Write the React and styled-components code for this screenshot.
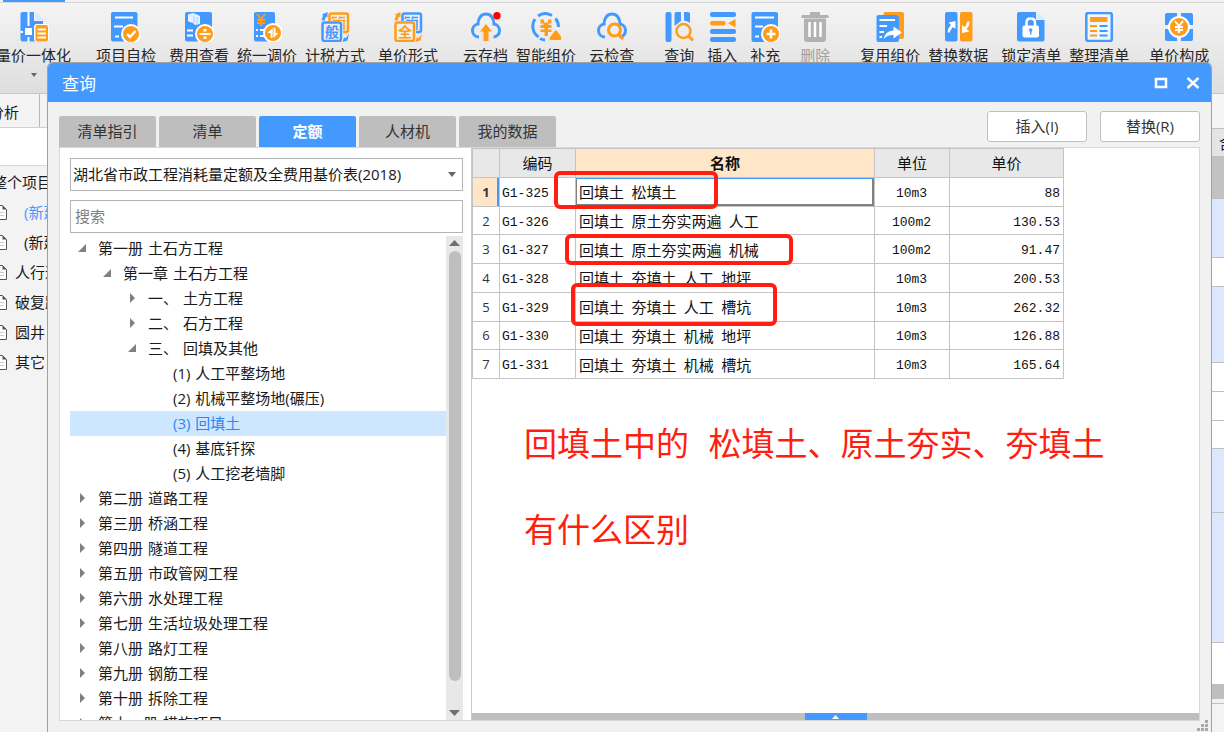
import React from 'react';
import styled, { createGlobalStyle } from 'styled-components';

const BLUE = '#4499ff';
const ORANGE = '#ff9c1a';
const RED = '#ff1e10';

const GlobalStyle = createGlobalStyle`
  * {
    box-sizing: border-box;
  }
  body {
    margin: 0;
    background: #f3f3f3;
    color: #1a1a1a;
    font: 15px/20px "Open Sans", "Noto Sans CJK SC", sans-serif;
  }
  button, input, select {
    font: inherit;
    color: inherit;
  }
`

const Screen = styled.div`
  position: relative;
  display: flex;
  flex-direction: column;
  height: 100vh;
  overflow: hidden;
`

const MenuStrip = styled.div`
  flex: none;
  height: 3px;
  padding-left: 3px;
  border-bottom: 1px solid #d6d6d6;
  background: #f3f3f3;
`

const MenuActive = styled.div`
  width: 62px;
  height: 2px;
  background: ${BLUE};
`

const Ribbon = styled.div`
  flex: none;
  display: flex;
  height: 91px;
  margin-left: -4px;
  padding-top: 9px;
  overflow: hidden;
  border-bottom: 1px solid #c8c8c8;
  background: linear-gradient(#f4f4f4, #dedede);
`

const Tool = styled.button`
  flex: none;
  display: flex;
  flex-direction: column;
  align-items: center;
  margin-left: ${({ $gap }) => $gap}px;
  padding: 0;
  border: 0;
  background: none;
  white-space: nowrap;
  color: ${({ disabled }) => (disabled ? '#a0a0a0' : '#262626')};
`

const ToolIcon = styled.svg`
  flex: none;
  width: 30px;
  height: 30px;
  margin-bottom: 3px;
`

const Caret = styled.svg`
  width: 8px;
  height: 5px;
  margin-top: ${({ $top = 0 }) => $top}px;
  fill: #666;
`

const Workspace = styled.div`
  flex: 1;
  display: flex;
  justify-content: space-between;
  min-height: 0;
  margin-left: -12px;
`

const Sidebar = styled.div`
  width: 72px;
`

const SideTabs = styled.div`
  height: 34px;
  border-bottom: 1px solid #d0d0d0;
`

const SideTab = styled.button`
  width: 52px;
  height: 33px;
  padding: 2px 0 0 1px;
  border: 0;
  border-right: 1px solid #b8b8b8;
  background: none;
  text-align: left;
`

const SideFilter = styled.div`
  height: 38px;
  border-bottom: 1px solid #d8d8d8;
  background: #fff;
`

const SideList = styled.ul`
  margin: 0;
  padding: 1px 0 0;
  list-style: none;
`

const SideItem = styled.li`
  display: flex;
  align-items: center;
  height: 30px;
  padding-left: ${({ $root }) => ($root ? 4 : 7)}px;
  white-space: nowrap;
  color: ${({ $active }) => ($active ? BLUE : 'inherit')};

  svg {
    flex: none;
    width: 12px;
    height: 15px;
    margin-right: ${({ $inset }) => ($inset ? 17 : 8)}px;
  }
`

const EdgeGrid = styled.div`
  width: 12px;
  overflow: hidden;
`

const EdgeCell = styled.div`
  height: ${({ $height }) => $height}px;
  padding: 4px 0 0 7px;
  border-bottom: 1px solid #c0c0c0;
  background: ${({ $fill }) => $fill};
`

const Dialog = styled.section`
  position: absolute;
  top: 62px;
  right: 12px;
  bottom: 0;
  left: 47px;
  display: flex;
  flex-direction: column;
  border: 1px solid #a0a0a0;
  border-bottom: 0;
  border-radius: 6px 6px 0 0;
  background: #f1f1f1;
  overflow: hidden;
`

const TitleBar = styled.header`
  flex: none;
  display: flex;
  align-items: center;
  height: 39px;
  padding: 0 11px 0 14px;
  background: ${BLUE};
  color: #fff;
`

const Title = styled.h1`
  flex: 1;
  margin: 0;
  padding-top: 3px;
  font-size: 17px;
  font-weight: 400;
`

const WindowButton = styled.button`
  display: flex;
  margin-left: 18px;
  padding: 0;
  border: 0;
  background: none;

  svg {
    width: 14px;
    height: 14px;
  }
`

const TopRow = styled.div`
  flex: none;
  display: flex;
  align-items: flex-end;
  height: 45px;
  padding: 0 11px;
`

const Tabs = styled.div`
  flex: 1;
  display: flex;
  gap: 3px;
`

const Tab = styled.button`
  width: 97px;
  height: 31px;
  padding: 0 0 2px;
  border: 0;
  border-radius: 2px 2px 0 0;
  background: ${({ $active }) => ($active ? BLUE : '#bebebe')};
  color: ${({ $active }) => ($active ? '#fff' : '#333')};
  font-weight: ${({ $active }) => ($active ? 700 : 400)};
`

const Actions = styled.div`
  display: flex;
  align-self: flex-start;
  gap: 13px;
  padding-top: 9px;
`

const ActionButton = styled.button`
  width: 100px;
  height: 31px;
  padding: 0 0 2px;
  border: 1px solid #c0c0c0;
  border-radius: 3px;
  background: #fff;
  color: #333;
`

const Panel = styled.div`
  flex: 1;
  display: flex;
  min-height: 0;
  margin: 0 11px 11px;
  border: 1px solid #d8d8d8;
  background: #fff;
`

const TreePane = styled.div`
  flex: none;
  display: flex;
  flex-direction: column;
  width: 412px;
  padding: 10px 8px 0 10px;
  border-right: 1px solid #c8c8c8;
`

const SelectBox = styled.div`
  flex: none;
  display: flex;
  align-items: center;
  height: 33px;
  padding-right: 6px;
  border: 1px solid #b4b4b4;
`

const LibrarySelect = styled.select`
  flex: 1;
  height: 31px;
  padding: 0 2px 2px;
  border: 0;
  background: none;
  appearance: none;
  outline: none;
`

const SearchInput = styled.input`
  flex: none;
  height: 33px;
  margin: 9px 0 3px;
  padding: 0 4px 2px;
  border: 1px solid #b4b4b4;
  border-radius: 0;
  outline: none;

  &::placeholder {
    color: #808080;
  }
`

const TreeArea = styled.div`
  flex: 1;
  display: flex;
  min-height: 0;
`

const Tree = styled.ul`
  flex: 1;
  margin: 0;
  padding: 0;
  overflow: hidden;
  list-style: none;
`

const TreeRow = styled.li`
  display: flex;
  align-items: center;
  height: 25px;
  padding: 0 0 2px ${({ $level }) => 8 + $level * 25}px;
  background: ${({ $selected }) => ($selected ? '#cce7ff' : 'none')};
  color: ${({ $selected }) => ($selected ? '#2f86f0' : 'inherit')};
  white-space: nowrap;

  svg {
    flex: none;
    width: 9px;
    height: 10px;
    margin-right: 11px;
    fill: #808080;
  }
`

const Word = styled.span`
  margin-right: ${({ $space }) => $space}px;
`

const Scrollbar = styled.div`
  flex: none;
  display: flex;
  flex-direction: column;
  align-items: center;
  width: 17px;
  padding: 4px 0;
  background: #e8e8e8;

  svg {
    width: 11px;
    height: 6px;
    fill: #6c6f78;
  }
`

const Thumb = styled.div`
  flex: 1;
  width: 12px;
  margin: 5px 0 29px;
  border-radius: 6px;
  background: #bebebe;
`

const GridPane = styled.div`
  flex: 1;
  display: flex;
  flex-direction: column;
  min-width: 0;
`

const GridBody = styled.div`
  position: relative;
  flex: 1;
  min-height: 0;
  overflow: hidden;
`

const Grid = styled.table`
  width: 591px;
  height: 231px;
  border-collapse: collapse;
  table-layout: fixed;
  color: #111;

  th, td {
    padding: 0;
    border: 1px solid #c4c4c4;
    line-height: 20px;
    text-align: center;
  }

  thead th {
    height: 29px;
    background: #e8e8e8;
    font-weight: 400;
  }

  thead th.current {
    background: #ffe6c8;
    font-weight: 700;
  }
`

const RowNumber = styled.th`
  background: ${({ $current }) => ($current ? '#ffe6c8' : '#fff')};
  box-shadow: ${({ $current }) => ($current ? `inset -2px 0 ${BLUE}` : 'none')};
  font-size: 13px;
  font-weight: ${({ $current }) => ($current ? 700 : 400)};
  color: #333;
`

const MonoCell = styled.td`
  && {
    padding: 4px 3px 0 2px;
    font-family: "Liberation Mono", monospace;
    font-size: 13px;
    text-align: ${({ $align }) => $align};
  }
`

const NameCell = styled.td`
  && {
    padding: 1px 0 0 3px;
    font-family: "Noto Sans CJK SC", sans-serif;
    text-align: left;
    white-space: nowrap;
    box-shadow: ${({ $current }) => ($current
    ? `inset 0 1px ${BLUE}, inset 1px 0 #808080, inset -2px -2px #808080`
    : 'none')};
  }
`

// hand-drawn highlight over the grid
const Mark = styled.div`
  position: absolute;
  top: ${({ $top }) => $top}px;
  left: ${({ $left }) => $left}px;
  width: ${({ $width }) => $width}px;
  height: ${({ $height }) => $height}px;
  border: 4px solid ${RED};
  border-radius: 6px;
`

const Note = styled.div`
  padding: 20px 0 0 52px;
  color: ${RED};
  font-family: "Noto Sans CJK SC", sans-serif;
  font-size: 33px;
  line-height: 86px;
  white-space: nowrap;

  p {
    margin: 0;
  }
`

const Splitter = styled.div`
  flex: none;
  display: flex;
  justify-content: center;
  height: 7px;
  background: #bebebe;
`

const SplitterButton = styled.button`
  display: flex;
  align-items: center;
  justify-content: center;
  width: 62px;
  padding: 0;
  border: 0;
  background: ${BLUE};

  svg {
    width: 7px;
    height: 4px;
    fill: #fff;
  }
`

const Grip = styled.svg`
  position: absolute;
  right: 3px;
  bottom: 1px;
  width: 11px;
  height: 11px;
  fill: #a8a8a8;
`

const line = (color, width) => ({ stroke: color, strokeWidth: width, fill: 'none' });

const Yen = ({ x, y, color }) => (
  <path d={`M${x - 4} ${y - 6}l4 5l4 -5M${x} ${y - 1}v7M${x - 4} ${y}h8M${x - 4} ${y + 3}h8`} {...line(color, 2)} />
);

const Badge = ({ x, y, r = 8 }) => (
  <>
    <circle cx={x} cy={y} r={r + 2} fill="#fff" />
    <circle cx={x} cy={y} r={r} fill={ORANGE} />
  </>
);

const Cloud = () => (
  <path
    d="M8 25C3.500 25 1.500 21.500 1.500 18.500C1.500 15 4 12.500 7 12C7 6 10.500 2 15 2C19.500 2 23 6 23 12C26.500 12.500 28.500 15.500 28.500 18.500C28.500 22 26 25 22.500 25"
    {...line(BLUE, 3)}
  />
);

const PairedSquares = ({ back, front, label, arrow }) => (
  <>
    <rect x="9.500" y="1.500" width="18.500" height="18.500" rx="2" {...line(back, 2.500)} />
    <path d="M13 4.500L12 7M12.500 5.500H17M20 4.500L19 7M19.500 5.500H25M13 8.500H25M24 8.500V18M22 11H16" {...line(back, 1.500)} />
    <rect x="1" y="9" width="22" height="21.500" rx="3" fill="#f0f0f0" />
    <rect x="2.500" y="10.500" width="18.500" height="18.500" rx="2" {...line(front, 2.500)} />
    <text x="12" y="25" fontSize="14" fontWeight="700" textAnchor="middle" fill={front}>{label}</text>
    <path d="M1.500 8.500L3 3.500L2 2.500L7.500 0V5.500L6 4.500L4.500 8.500zM29 21.500L27.500 28.500L22.500 30L24 25.500L26 26z" fill={arrow} />
  </>
);

const icons = {
  price: (
    <>
      <path d="M3.500 0H15V9H24V29.500H3.500Q1.500 29.500 1.500 27.500V2Q1.500 0 3.500 0z" fill={BLUE} />
      <path d="M16.500 0L25 8H16.500z" fill="#d5e9ff" />
      <path d="M9.500 0V14M9.500 25V30M1.500 20H4" {...line('#fff', 2)} />
      <path d="M6 16h7v7h-7z" fill="#fff" />
      <rect x="15" y="12" width="15" height="18" rx="3" fill="#fff" />
      <rect x="16.500" y="13" width="12.500" height="16.500" rx="2" fill={ORANGE} />
      <path d="M18.500 17.500H27M18.500 21.500H27M18.500 25.500H27" {...line('#fff', 2)} />
    </>
  ),
  check: (
    <>
      <rect x="0" y="0" width="26.500" height="29.500" rx="2" fill={BLUE} />
      <path d="M4 5.500H22M3 14.500H12M4 24.500H8" {...line('#fff', 2)} />
      <Badge x={20} y={22} />
      <path d="M16 22L19 25L24.500 19" {...line('#fff', 2.5)} />
    </>
  ),
  fee: (
    <>
      <rect x="1" y="0" width="27" height="29.500" rx="2" fill={BLUE} />
      <path d="M4 2.500L9 1L13 2.500L16 4V12L11 13L9 11L4 9.500z" fill="#e6f2ff" />
      <path d="M10 4V11M13 5V12" {...line('#a4ceff', 1)} />
      <path d="M3 18.500H9M3 23.500H9" {...line('#fff', 2)} />
      <Badge x={21} y={22} />
      <path d="M15.500 22H26.500" {...line('#fff', 2)} />
      <path d="M19.500 17h3v2.500h-3zM19.500 24.500h3v2.500h-3z" fill="#fff" />
    </>
  ),
  adjust: (
    <>
      <rect x="2" y="0" width="21" height="29.500" rx="2" fill={BLUE} />
      <Yen x={9} y={8} color={ORANGE} />
      <path d="M4 18H6M8 18H12M4 24H6M8 24H12" {...line('#fff', 2)} />
      <Badge x={21} y={21} />
      <path d="M19.500 26V18M22.500 16V24" {...line('#fff', 2)} />
      <path d="M15.500 21L20.500 16V21zM21.500 21H26.500L21.500 26z" fill="#fff" />
    </>
  ),
  tax: <PairedSquares back={ORANGE} front={BLUE} label="般" arrow={BLUE} />,
  unit: <PairedSquares back={BLUE} front={ORANGE} label="全" arrow={ORANGE} />,
  cloudSave: (
    <>
      <Cloud />
      <path d="M10 20V31H20V20z" fill="#e9e9e9" />
      <path d="M15 12L21 19.500H17.500V29H12.500V19.500H9z" fill={ORANGE} />
      <circle cx="26" cy="3.700" r="3.700" fill="#f00" />
    </>
  ),
  smart: (
    <>
      <path d="M7.500 25A13 13 0 0 1 4 7M7 4A13 13 0 0 1 21 3.500M24.500 6.500A13 13 0 0 1 27.500 15M9 26.500A13 13 0 0 0 14 28" {...line(BLUE, 3)} />
      <path d="M9.500 7.500h3.500v3h4v-3h3.500v4h-3v1.500h3v3h-3.500v1.500h3.500v2.500h-3.500v4h-3.500v-4h-4v-2.500h4v-1.500h-4v-3h3v-1.500h-3z" fill={ORANGE} />
      <path d="M25 20L29.500 26.500H20z" fill={ORANGE} stroke={ORANGE} strokeWidth="3" strokeLinejoin="round" />
    </>
  ),
  cloudCheck: (
    <>
      <Cloud />
      <circle cx="17.500" cy="18" r="6" {...line(ORANGE, 3)} />
      <path d="M21.500 22L26 27" {...line(ORANGE, 3)} />
    </>
  ),
  query: (
    <>
      <rect x="1.500" y="0" width="6" height="30" rx="2" fill={BLUE} />
      <path d="M12.500 0H17V9L10.500 14V2Q10.500 0 12.500 0zM20 0H24Q26 0 26 2V11Q23 8.500 20 8.500z" fill={BLUE} />
      <circle cx="19.500" cy="19" r="7" {...line(ORANGE, 2.5)} />
      <path d="M24.500 24L29 28.500" {...line(ORANGE, 3)} />
    </>
  ),
  insert: (
    <>
      <g fill={BLUE}>
        <rect x="3" y="0" width="26" height="5" rx="2" />
        <rect x="3" y="17" width="26" height="5" rx="2" />
        <rect x="3" y="25" width="26" height="5" rx="2" />
      </g>
      <rect x="3" y="9" width="15.500" height="4.500" rx="2" fill={ORANGE} />
      <path d="M21 11.300L28.500 7V15.500z" fill={ORANGE} />
    </>
  ),
  add: (
    <>
      <rect x="1.500" y="0" width="26.500" height="30" rx="2" fill={BLUE} />
      <path d="M5 5.500H24M5 14.500H13M5 24.500H9" {...line('#fff', 2)} />
      <Badge x={21} y={22} />
      <path d="M21 17.500V26.500M16.500 22H25.500" {...line('#fff', 2.5)} />
    </>
  ),
  trash: (
    <>
      <path d="M10 3V0H20V3H28Q29 4 28.500 6H1.500Q1 4 2 3zM4 6.500H26V27Q26 30 23 30H7Q4 30 4 27z" fill="#b2b2b2" />
      <path d="M9.500 10V25M15 10V25M20.500 10V25" {...line('#fff', 2.5)} />
    </>
  ),
  reuse: (
    <>
      <rect x="8.500" y="0" width="20.500" height="27" rx="2" fill={ORANGE} />
      <path d="M3.500 3H20Q24 3 24 7V28Q24 30 22 30H3.500Q1.500 30 1.500 28V5Q1.500 3 3.500 3z" fill={BLUE} />
      <path d="M4.500 8H20M4.500 14H12M4.500 20H9M4.500 25H7" {...line('#fff', 2)} />
      <path d="M8.500 27Q10 19 18.500 18.500V14.500L27 20.500L18.500 26.500V23Q13 22.500 8.500 27z" fill="#fff" />
    </>
  ),
  swap: (
    <>
      <rect x="2" y="0" width="12.500" height="29.500" rx="2" fill={BLUE} />
      <rect x="17" y="0" width="12.500" height="29.500" rx="2" fill={ORANGE} />
      <path d="M4.500 20.500Q5 15.500 8 13L5.500 10.500L12.500 9V17L10 15Q8 17 6.500 20.500z" fill="#fff" />
      <path d="M26.500 9.500Q26.500 14.500 23.500 17L26.500 19.500L19 21V13L21.500 15Q23.500 13 24.500 9.500z" fill="#fff" />
    </>
  ),
  lock: (
    <>
      <path d="M3 0H20V8H28.500V27.500Q28.500 29.500 26.500 29.500H3Q1 29.500 1 27.500V2Q1 0 3 0z" fill={BLUE} />
      <path d="M21 0L28.500 7H21z" fill="#d5e9ff" />
      <path d="M10.500 15V10.500Q10.500 6.500 14.700 6.500Q19 6.500 19 10.500V15" {...line('#fff', 2.5)} />
      <rect x="6.500" y="13.500" width="16.500" height="12" rx="2" fill="#fff" />
      <circle cx="14.700" cy="18" r="1.700" fill={BLUE} />
      <path d="M14.700 18V22.500" {...line(BLUE, 1.5)} />
    </>
  ),
  arrange: (
    <>
      <rect x="2.300" y="1" width="25.500" height="28" rx="2" fill="#eef6ff" stroke={BLUE} strokeWidth="2.500" />
      <rect x="6" y="5" width="17.500" height="5" rx="1" fill={ORANGE} />
      <path d="M6 14H13M6 19H13M6 23.500H13" {...line(ORANGE, 2)} />
      <path d="M15.500 14H23.500M15.500 19H23.500M15.500 23.500H23.500" {...line(BLUE, 2)} />
    </>
  ),
  compose: (
    <>
      <path d="M3 1H13V13H1V3Q1 1 3 1zM17 1H27Q29 1 29 3V13H17zM1 17H13V29H3Q1 29 1 27zM17 17H29V27Q29 29 27 29H17z" fill={BLUE} />
      <Badge x={15} y={15} r={9} />
      <Yen x={15} y={15} color="#fff" />
    </>
  ),
};

const tools = [
  { icon: 'price', label: '量价一体化', gap: 0, menu: true },
  { icon: 'check', label: '项目自检', gap: 25 },
  { icon: 'fee', label: '费用查看', gap: 13 },
  { icon: 'adjust', label: '统一调价', gap: 8 },
  { icon: 'tax', label: '计税方式', gap: 8 },
  { icon: 'unit', label: '单价形式', gap: 13 },
  { icon: 'cloudSave', label: '云存档', gap: 25 },
  { icon: 'smart', label: '智能组价', gap: 8 },
  { icon: 'cloudCheck', label: '云检查', gap: 13 },
  { icon: 'query', label: '查询', gap: 30 },
  { icon: 'insert', label: '插入', gap: 13 },
  { icon: 'add', label: '补充', gap: 13 },
  { icon: 'trash', label: '删除', gap: 20, disabled: true },
  { icon: 'reuse', label: '复用组价', gap: 30 },
  { icon: 'swap', label: '替换数据', gap: 8 },
  { icon: 'lock', label: '锁定清单', gap: 13 },
  { icon: 'arrange', label: '整理清单', gap: 8 },
  { icon: 'compose', label: '单价构成', gap: 20 },
];

const sideItems = [
  { label: '(新建)', active: true, inset: true },
  { label: '(新建)', inset: true },
  { label: '人行道' },
  { label: '破复路' },
  { label: '圆井' },
  { label: '其它' },
];

const edgeCells = [
  [35, '#f5f5f5'],
  [28, '#e4e4e4', '含'],
  [42, '#c2c2c2'],
  [59, '#dbe8ff'],
  [29, '#fff'],
  [76, '#dbe8ff'],
  [29, '#fff'],
  [29, '#fff'],
  [28, '#fff'],
  [64, '#dbe8ff'],
  [130, '#dbe8ff'],
  [42, '#fff'],
  [14, '#bebebe'],
  [3, '#f1f1f1'],
];

const tabs = ['清单指引', '清单', '定额', '人材机', '我的数据'];

const treeNodes = [
  { level: 0, state: 'open', label: '第一册 土石方工程' },
  { level: 1, state: 'open', label: '第一章 土石方工程' },
  { level: 2, state: 'closed', label: '一、 土方工程' },
  { level: 2, state: 'closed', label: '二、 石方工程' },
  { level: 2, state: 'open', label: '三、 回填及其他' },
  { level: 3, label: '(1) 人工平整场地' },
  { level: 3, label: '(2) 机械平整场地(碾压)' },
  { level: 3, label: '(3) 回填土', selected: true },
  { level: 3, label: '(4) 基底钎探' },
  { level: 3, label: '(5) 人工挖老墙脚' },
  { level: 0, state: 'closed', label: '第二册 道路工程' },
  { level: 0, state: 'closed', label: '第三册 桥涵工程' },
  { level: 0, state: 'closed', label: '第四册 隧道工程' },
  { level: 0, state: 'closed', label: '第五册 市政管网工程' },
  { level: 0, state: 'closed', label: '第六册 水处理工程' },
  { level: 0, state: 'closed', label: '第七册 生活垃圾处理工程' },
  { level: 0, state: 'closed', label: '第八册 路灯工程' },
  { level: 0, state: 'closed', label: '第九册 钢筋工程' },
  { level: 0, state: 'closed', label: '第十册 拆除工程' },
  { level: 0, state: 'closed', label: '第十一册 措施项目' },
];

const rows = [
  ['G1-325', '回填土 松填土', '10m3', '88'],
  ['G1-326', '回填土 原土夯实两遍 人工', '100m2', '130.53'],
  ['G1-327', '回填土 原土夯实两遍 机械', '100m2', '91.47'],
  ['G1-328', '回填土 夯填土 人工 地坪', '10m3', '200.53'],
  ['G1-329', '回填土 夯填土 人工 槽坑', '10m3', '262.32'],
  ['G1-330', '回填土 夯填土 机械 地坪', '10m3', '126.88'],
  ['G1-331', '回填土 夯填土 机械 槽坑', '10m3', '165.64'],
];

const treeArrows = {
  open: 'M8 1V9H0z',
  closed: 'M2 0L7 5L2 10z',
};

function Words({ text, space }) {
  return text.split(' ').map((word, i, all) => (
    <React.Fragment key={i}>
      <Word $space={i < all.length - 1 ? space : 0}>{word}</Word>
      {i < all.length - 1 && ' '}
    </React.Fragment>
  ));
}

function Toolbar() {
  return (
    <Ribbon>
      {tools.map((tool) => (
        <Tool key={tool.label} $gap={tool.gap} disabled={tool.disabled}>
          <ToolIcon viewBox="0 0 30 30">{icons[tool.icon]}</ToolIcon>
          {tool.label}
          {tool.menu && <Caret $top={8} viewBox="0 0 8 5"><path d="M1 0H7L4 4z" /></Caret>}
        </Tool>
      ))}
      <Tool $gap={13}>
        <ToolIcon viewBox="0 0 30 30" />
        提<br />取
      </Tool>
    </Ribbon>
  );
}

function ProjectSidebar() {
  return (
    <Sidebar>
      <SideTabs><SideTab>分析</SideTab></SideTabs>
      <SideFilter />
      <SideList>
        <SideItem $root>整个项目</SideItem>
        {sideItems.map((item, i) => (
          <SideItem key={i} $active={item.active} $inset={item.inset}>
            <svg viewBox="0 0 12 15">
              <path d="M0.500 0.500H7.500L11.500 4.500V14.500H0.500z" fill="#fff" stroke="#555" />
              <path d="M7.500 0.500V4.500H11.500z" fill="#555" />
              <path d="M2 7.500H9M2 10.500H9" stroke="#ccc" />
            </svg>
            {item.label}
          </SideItem>
        ))}
      </SideList>
    </Sidebar>
  );
}

function QuotaTree() {
  return (
    <TreePane>
      <SelectBox>
        <LibrarySelect aria-label="定额库">
          <option>湖北省市政工程消耗量定额及全费用基价表(2018)</option>
        </LibrarySelect>
        <Caret viewBox="0 0 8 5"><path d="M0 0H8L4 5z" /></Caret>
      </SelectBox>
      <SearchInput type="text" placeholder="搜索" aria-label="搜索" />
      <TreeArea>
        <Tree role="tree">
          {treeNodes.map((node) => (
            <TreeRow
              key={node.label}
              role="treeitem"
              aria-selected={!!node.selected}
              $level={node.level}
              $selected={node.selected}
            >
              <svg viewBox="0 0 9 10">{node.state && <path d={treeArrows[node.state]} />}</svg>
              <span><Words text={node.label} space={1} /></span>
            </TreeRow>
          ))}
        </Tree>
        <Scrollbar>
          <svg viewBox="0 0 11 6"><path d="M0 6L5.500 0L11 6z" /></svg>
          <Thumb />
          <svg viewBox="0 0 11 6"><path d="M0 0L5.500 6L11 0z" /></svg>
        </Scrollbar>
      </TreeArea>
    </TreePane>
  );
}

function QuotaGrid() {
  return (
    <GridPane>
      <GridBody>
        <Grid>
          <colgroup>
            <col width="27" />
            <col width="76" />
            <col width="299" />
            <col width="75" />
            <col width="114" />
          </colgroup>
          <thead>
            <tr>
              <th />
              <th>编码</th>
              <th className="current">名称</th>
              <th>单位</th>
              <th>单价</th>
            </tr>
          </thead>
          <tbody>
            {rows.map(([code, name, unit, price], i) => (
              <tr key={code}>
                <RowNumber scope="row" $current={i === 0}>{i + 1}</RowNumber>
                <MonoCell $align="left">{code}</MonoCell>
                <NameCell $current={i === 0}><Words text={name} space={4} /></NameCell>
                <MonoCell $align="center">{unit}</MonoCell>
                <MonoCell $align="right">{price}</MonoCell>
              </tr>
            ))}
          </tbody>
        </Grid>
        <Mark $left={82} $top={23} $width={164} $height={38} />
        <Mark $left={93} $top={86} $width={228} $height={31} />
        <Mark $left={99} $top={135} $width={206} $height={43} />
        <Note>
          <p><Words text="回填土中的  松填土、原土夯实、夯填土" space={6} /></p>
          <p>有什么区别</p>
        </Note>
      </GridBody>
      <Splitter>
        <SplitterButton aria-label="展开">
          <svg viewBox="0 0 7 4"><path d="M0 4L3.500 0L7 4z" /></svg>
        </SplitterButton>
      </Splitter>
    </GridPane>
  );
}

export default function App() {
  return (
    <Screen>
      <GlobalStyle />
      <MenuStrip><MenuActive /></MenuStrip>
      <Toolbar />
      <Workspace>
        <ProjectSidebar />
        <EdgeGrid>
          {edgeCells.map(([height, fill, text], i) => (
            <EdgeCell key={i} $height={height} $fill={fill}>{text}</EdgeCell>
          ))}
        </EdgeGrid>
      </Workspace>
      <Dialog>
        <TitleBar>
          <Title>查询</Title>
          <WindowButton aria-label="最大化">
            <svg viewBox="0 0 14 14"><path d="M2 3H12V11H2z" {...line('#fff', 2.5)} /></svg>
          </WindowButton>
          <WindowButton aria-label="关闭">
            <svg viewBox="0 0 14 14"><path d="M1.500 2L12.500 12M12.500 2L1.500 12" {...line('#fff', 2.5)} /></svg>
          </WindowButton>
        </TitleBar>
        <TopRow>
          <Tabs>
            {tabs.map((tab) => (
              <Tab key={tab} $active={tab === '定额'}>{tab}</Tab>
            ))}
          </Tabs>
          <Actions>
            <ActionButton>插入(I)</ActionButton>
            <ActionButton>替换(R)</ActionButton>
          </Actions>
        </TopRow>
        <Panel>
          <QuotaTree />
          <QuotaGrid />
        </Panel>
        <Grip viewBox="0 0 11 11">
          <path d="M8 0h3v3h-3zM4 4h3v3h-3zM8 4h3v3h-3zM0 8h3v3h-3zM4 8h3v3h-3zM8 8h3v3h-3z" />
        </Grip>
      </Dialog>
    </Screen>
  );
}
